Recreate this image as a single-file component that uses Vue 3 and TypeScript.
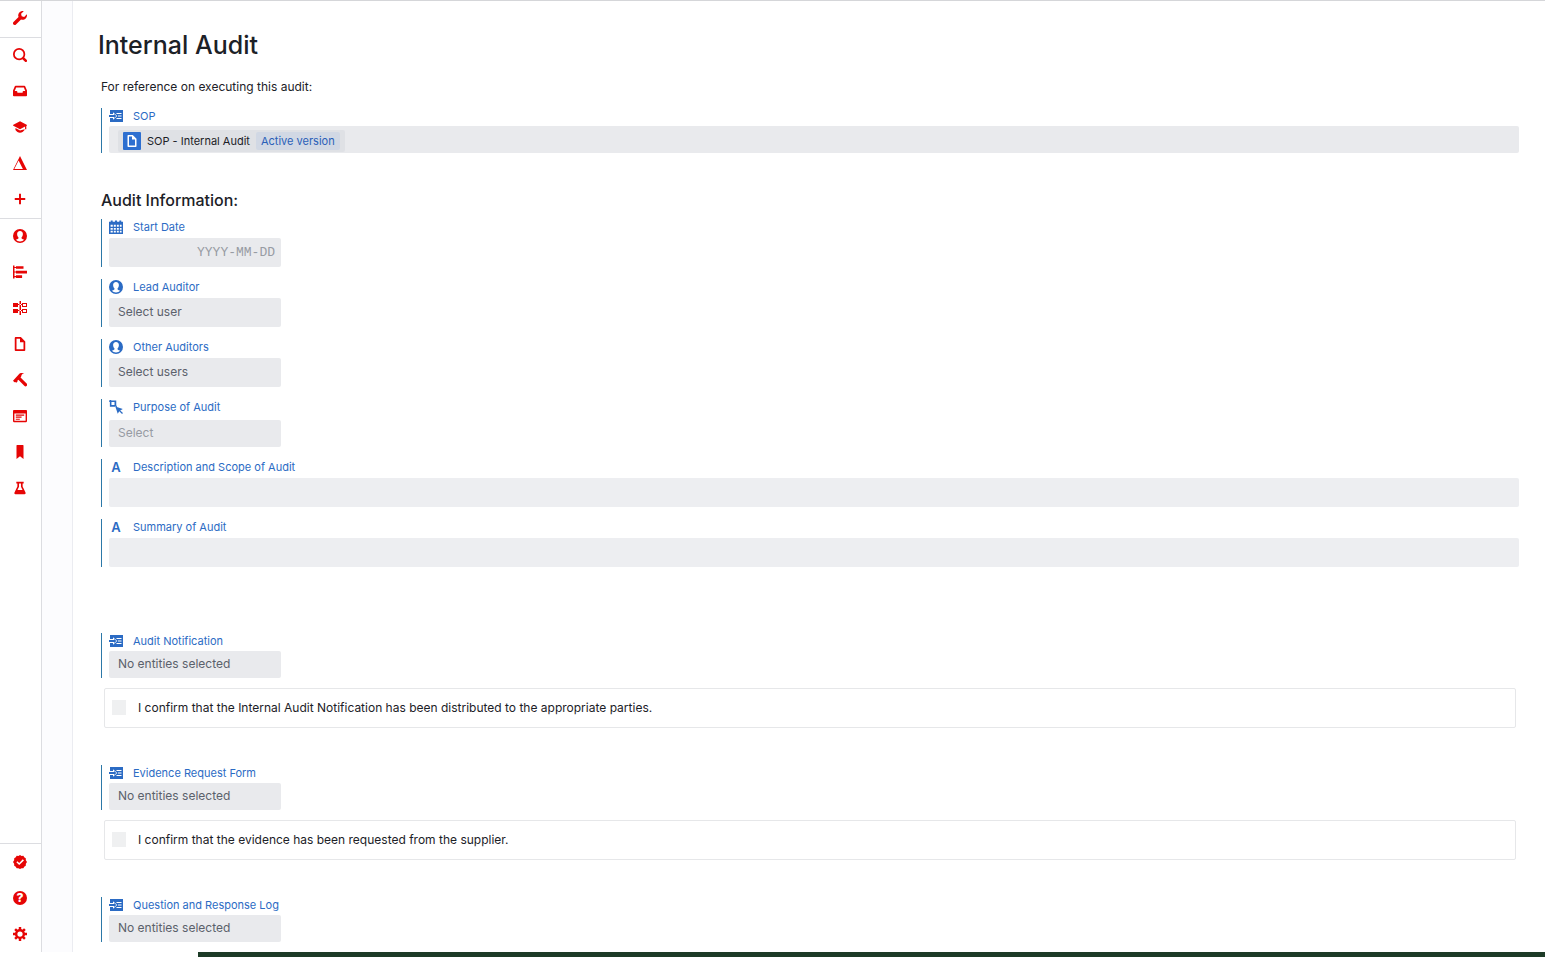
<script setup lang="ts">
import { ref } from 'vue'

interface NavItem {
  id: string
  label: string
}

interface Evidence {
  id: string
  label: string
  confirm: string
}

const navGroups: NavItem[][] = [
  [{ id: 'wrench', label: 'Tools' }],
  [
    { id: 'search', label: 'Search' },
    { id: 'inbox', label: 'Inbox' },
    { id: 'learning', label: 'Training' },
    { id: 'delta', label: 'Changes' },
    { id: 'plus', label: 'Create' },
  ],
  [
    { id: 'user', label: 'Users' },
    { id: 'gantt', label: 'Timeline' },
    { id: 'flow', label: 'Traceability' },
    { id: 'document', label: 'Documents' },
    { id: 'build', label: 'Builds' },
    { id: 'application', label: 'Forms' },
    { id: 'bookmark', label: 'Bookmarks' },
    { id: 'flask', label: 'Tests' },
  ],
  [
    { id: 'endorsed', label: 'Approvals' },
    { id: 'help', label: 'Help' },
    { id: 'cog', label: 'Settings' },
  ],
]

const evidence: Evidence[] = [
  {
    id: 'notification',
    label: 'Audit Notification',
    confirm: 'I confirm that the Internal Audit Notification has been distributed to the appropriate parties.',
  },
  {
    id: 'evidence',
    label: 'Evidence Request Form',
    confirm: 'I confirm that the evidence has been requested from the supplier.',
  },
  { id: 'log', label: 'Question and Response Log', confirm: '' },
]

const startDate = ref('')
const purpose = ref('')
const description = ref('')
const summary = ref('')
const confirmed = ref<string[]>([])
</script>

<template>
  <div class="shell">
    <svg class="symbols" aria-hidden="true">
      <symbol id="i-wrench" viewBox="0 0 16 16"><path d="M15.83 3.7l-3.06 3.05-2.84-.7-.7-2.83L12.29.17a5 5 0 0 0-4.83 1.29 4.97 4.97 0 0 0-1.12 5.36L.58 12.58A2 2 0 0 0 2 16c.55 0 1.05-.22 1.41-.59l5.77-5.77c1.79.69 3.91.35 5.35-1.12 1.32-1.3 1.74-3.15 1.3-4.82z" /></symbol>
      <symbol id="i-search" viewBox="0 0 16 16"><path fill-rule="evenodd" d="M15.55 13.43l-2.67-2.68A6.94 6.94 0 0 0 14 7a7 7 0 1 0-7 7c1.39 0 2.68-.42 3.76-1.11l2.68 2.67a1.5 1.5 0 1 0 2.12-2.12zM7 12A5 5 0 1 1 7 2a5 5 0 0 1 0 10z" /></symbol>
      <symbol id="i-inbox" viewBox="0 0 16 16"><path fill-rule="evenodd" d="M13.91 2.6A1 1 0 0 0 13 2H3a1 1 0 0 0-.92.6L0 7.45V13c0 .55.45 1 1 1h14c.55 0 1-.45 1-1V7.45zM12 8c-.55 0-1 .45-1 1v1H5V9c0-.55-.45-1-1-1H2l1.6-4h8.8L14 8z" /></symbol>
      <symbol id="i-learning" viewBox="0 0 16 16"><path d="M8 1.3.4 5.3c-.5.3-.5.9 0 1.2L8 10.6l5.800-3.100v3.200h1.400V6.800l.4-.3c.5-.3.5-.9 0-1.200zM2.800 9.100v2.400C4 13.400 5.900 14.600 8 14.600s4-1.200 5.200-3.100v-.9L8 12z" /></symbol>
      <symbol id="i-delta" viewBox="0 0 16 16"><path fill-rule="evenodd" d="M8 0 0 16h16zM6.400 5 11.300 14.800H1.500z" /></symbol>
      <symbol id="i-plus" viewBox="0 0 16 16"><path d="M6.900 2h2.200v4.900H14v2.200H9.100V14H6.900V9.100H2V6.900h4.900z" /></symbol>
      <symbol id="i-user" viewBox="0 0 16 16"><path fill-rule="evenodd" d="M8 0a8 8 0 1 0 0 16A8 8 0 0 0 8 0zM8 2.200c2.100 0 3.300 1.500 3.300 3.500 0 1.600-.6 3-1.500 3.800v1.300c.8.700 2 1 3 1.600A6.400 6.400 0 0 1 8 14.400a6.400 6.400 0 0 1-4.800-2c1-.6 2.200-.9 3-1.600V9.500C5.300 8.700 4.700 7.300 4.700 5.700c0-2 1.200-3.500 3.300-3.500z" /></symbol>
      <symbol id="i-gantt" viewBox="0 0 16 16"><path d="M0 .6h1.700v14.800H0zM3.400 1.300H12v3.100H3.400zM3.400 6.500H16v3.100H3.400zM3.400 11.700h7v3.100h-7zM1 2.300h3v1.200H1zM1 7.500h3v1.200H1zM1 12.700h3v1.200H1z" /></symbol>
      <symbol id="i-flow" viewBox="0 0 14 14"><path fill-rule="evenodd" d="M6.500 0H8v14H6.500zM0 2h5v1h2v1H5v2H0zM0 8h5v1h2v1H5v2H0zM9 2h5v4H9V4H7V3h2zm1 1v2h3V3zM9 8h5v4H9v-2H7V9h2zm1 1v2h3V9z" /></symbol>
      <symbol id="i-document" viewBox="0 0 16 16"><path fill-rule="evenodd" d="M9 0H3c-.55 0-1 .45-1 1v14c0 .55.45 1 1 1h10c.55 0 1-.45 1-1V5zm3 14H4V2h4v4h4z" /></symbol>
      <symbol id="i-build" viewBox="0 0 16 16"><path d="M0 8.900 6.500 1.600C7.900.1 10.500-.4 12.900.7c-2 .3-3.200 1.300-3.400 2.700-.1.700-.4 1.200-.9 1.700l7 6.900c.8.900.8 2 .1 2.700-.8.800-1.900.8-2.800 0L6.100 7.700 5 8.800l.2.900-1.500 1.500-1.200-1-.9.400z" /></symbol>
      <symbol id="i-application" viewBox="0 0 16 16"><path fill-rule="evenodd" d="M1 1h14c.55 0 1 .45 1 1v12c0 .55-.45 1-1 1H1c-.55 0-1-.45-1-1V2c0-.55.45-1 1-1zm.6 4v8.400h12.800V5zM3.200 6.400h9.600v1.300H3.200zM3.200 8.700h6.600V10H3.200zM3.200 11h4.600v1.200H3.200z" /></symbol>
      <symbol id="i-bookmark" viewBox="0 0 16 16"><path d="M4.600 0h6.800c.4 0 .6.300.6.600V16l-4-3.200L4 16V.600c0-.3.200-.6.600-.6z" /></symbol>
      <symbol id="i-flask" viewBox="0 0 16 16"><path fill-rule="evenodd" d="M3.800.9h8.400v1.900H11v3.400l3.300 7c.4 1-.1 1.900-1.100 1.900H2.800c-1 0-1.500-.9-1.100-1.900l3.300-7V2.800H3.800zM6.900 2.800v3.900L5.100 10.400h5.800L9.100 6.700V2.800z" /></symbol>
      <symbol id="i-endorsed" viewBox="0 0 16 16"><path fill-rule="evenodd" d="M8 0l1.800 1 2-.1 1 1.800 1.800 1.100L14.700 6 16 8l-1.300 2-.1 2.200-1.800 1.100-1 1.800-2-.1L8 16l-1.800-1-2 .1-1-1.800-1.800-1.100L1.300 10 0 8l1.300-2 .1-2.200 1.800-1.100 1-1.800 2 .1zM11.200 4.900 7.100 9 5 7 3.800 8.200l3.300 3.200 5.400-5.200z" /></symbol>
      <symbol id="i-cog" viewBox="0 0 16 16"><circle cx="8" cy="8" r="4.400" fill="none" stroke="currentColor" stroke-width="2.800" /><path d="M8 0v3.500M8 12.500V16M0 8h3.500M12.500 8H16M2.400 2.400l2.400 2.400M11.200 11.200l2.400 2.400M13.600 2.400l-2.400 2.400M4.800 11.200l-2.400 2.400" stroke="currentColor" stroke-width="2.800" /></symbol>
      <symbol id="i-import" viewBox="0 0 14 14"><path d="M1 1h13v12H1z" /><path d="M0 5h4V3.200L8.300 7 4 10.800V9H0z" fill="#fff" /><path d="M0 6h5V4.900L7.500 7 5 9.100V8H0z" /><path d="M7 4h5.500v1H8zM9 6.500h3.500v1H9zM8 9h4.500v1H7z" fill="#fff" /></symbol>
      <symbol id="i-calendar" viewBox="0 0 16 16"><path fill-rule="evenodd" d="M0 2h2V.6h2.200V2h2.600V.6H9.200V2h2.600V.6H14V2h2v14H0zM1.800 5.500v2.300h2.500V5.500zm3.700 0v2.300h2.300V5.500zm3.500 0v2.300h2.200V5.500zm3.400 0v2.300h2V5.500zM1.800 9v2.200h2.500V9zm3.700 0v2.200h2.300V9zM9 9v2.200h2.200V9zm3.400 0v2.200h2V9zM1.800 12.400v2h2.500v-2zm3.700 0v2h2.300v-2zm3.500 0v2h2.200v-2zm3.400 0v2h2v-2z" /></symbol>
      <symbol id="i-select" viewBox="0 0 16 16"><path fill-rule="evenodd" d="M0 .7h1V0h1.500v.7H8.300v5.800h.8v1.400H7.200v-.2H1V2.100H0zM2.800 2.400v3.400h3.500V2.400zM7.200 7.400l8.600 2.800-3 1.700 3.200 3L14.900 16l-3.200-3.100-1.700 2.900z" /></symbol>
    </svg>

    <div class="workspace">
      <nav class="rail" aria-label="Main">
        <div v-for="(group, index) in navGroups" :key="index" class="rail-group">
          <button v-for="item in group" :key="item.id" class="rail-item" type="button" :aria-label="item.label">
            <span v-if="item.id === 'help'" class="help">?</span>
            <svg v-else class="icon" aria-hidden="true"><use :href="`#i-${item.id}`" /></svg>
          </button>
        </div>
      </nav>
      <div class="gutter"></div>

      <main class="page">
        <h1 class="title">Internal Audit</h1>

        <div class="body">
          <p class="intro">For reference on executing this audit:</p>

          <section class="field" aria-labelledby="sop-label">
            <span id="sop-label" class="label">
              <svg class="icon" aria-hidden="true"><use href="#i-import" /></svg>SOP
            </span>
            <div class="box compact wide holder">
              <a class="chip" href="#sop">
                <span class="chip-icon"><svg aria-hidden="true"><use href="#i-document" /></svg></span>
                SOP - Internal Audit
                <span class="tag">Active version</span>
              </a>
            </div>
          </section>

          <h2 class="heading">Audit Information:</h2>

          <div class="fields">
            <div class="field">
              <label class="label" for="start-date">
                <svg class="icon" aria-hidden="true"><use href="#i-calendar" /></svg>Start Date
              </label>
              <input id="start-date" v-model="startDate" class="box date" type="text" placeholder="YYYY-MM-DD" />
            </div>
            <div class="field">
              <label class="label" for="lead-auditor">
                <svg class="icon" aria-hidden="true"><use href="#i-user" /></svg>Lead Auditor
              </label>
              <button id="lead-auditor" class="box" type="button">Select user</button>
            </div>
            <div class="field">
              <label class="label" for="other-auditors">
                <svg class="icon" aria-hidden="true"><use href="#i-user" /></svg>Other Auditors
              </label>
              <button id="other-auditors" class="box" type="button">Select users</button>
            </div>
            <div class="field">
              <label class="label" for="purpose">
                <svg class="icon" aria-hidden="true"><use href="#i-select" /></svg>Purpose of Audit
              </label>
              <select id="purpose" v-model="purpose" class="box compact muted">
                <option value="">Select</option>
              </select>
            </div>
            <div class="field">
              <label class="label" for="description">
                <span class="letter" aria-hidden="true">A</span>Description and Scope of Audit
              </label>
              <input id="description" v-model="description" class="box wide pale" type="text" />
            </div>
            <div class="field">
              <label class="label" for="summary">
                <span class="letter" aria-hidden="true">A</span>Summary of Audit
              </label>
              <input id="summary" v-model="summary" class="box wide pale" type="text" />
            </div>
          </div>

          <section v-for="item in evidence" :key="item.id" class="evidence">
            <div class="field">
              <label class="label" :for="item.id">
                <svg class="icon" aria-hidden="true"><use href="#i-import" /></svg>{{ item.label }}
              </label>
              <button :id="item.id" class="box compact" type="button">No entities selected</button>
            </div>
            <label class="confirm">
              <template v-if="item.confirm">
                <input v-model="confirmed" class="check" type="checkbox" :value="item.id" />
                {{ item.confirm }}
              </template>
            </label>
          </section>
        </div>
      </main>
    </div>

    <footer class="strip"></footer>
  </div>
</template>

<style>
body {
  margin: 0;
  background: #fff;
}
</style>

<style scoped>
.shell {
  display: flex;
  flex-direction: column;
  box-sizing: border-box;
  height: 100vh;
  border-top: 1px solid #d5d6d9;
  overflow: hidden;
  font-family: Inter, "Liberation Sans", sans-serif;
  font-size: 12px;
  color: #1c2127;
}
.symbols {
  position: absolute;
  width: 0;
  height: 0;
}
.workspace {
  display: flex;
  flex: 1;
  min-height: 0;
}
.strip {
  flex: none;
  height: 5px;
  margin-left: 198px;
  background: #1d3b27;
}

.rail {
  display: flex;
  flex: none;
  flex-direction: column;
  width: 41px;
  border-right: 1px solid #dcdde1;
}
.rail-group {
  display: flex;
  flex-direction: column;
  gap: 16px;
  padding: 7px 1px 9px 0;
  border-bottom: 1px solid #dcdde1;
}
.rail-group:nth-child(3) {
  border-bottom: 0;
}
.rail-group:last-child {
  margin-top: auto;
  padding: 8px 1px 8px 0;
  border-top: 1px solid #dcdde1;
  border-bottom: 0;
}
.rail-item {
  display: flex;
  align-items: center;
  justify-content: center;
  height: 20px;
  padding: 0;
  border: 0;
  background: none;
  color: #e60505;
  cursor: pointer;
}
.icon {
  flex: none;
  width: 14px;
  height: 14px;
  fill: currentColor;
}
.help {
  width: 14px;
  height: 14px;
  border-radius: 7px;
  background: #e60505;
  color: #fff;
  font-family: Inter, "Liberation Sans", sans-serif;
  font-size: 12px;
  font-weight: 800;
  line-height: 14px;
  text-align: center;
}
.gutter {
  flex: none;
  width: 30px;
  border-right: 1px solid #ebecf1;
  background: #fcfcfe;
}

.page {
  flex: 1;
  min-width: 0;
  padding: 28px 26px 0 25px;
  overflow: hidden;
}
.title {
  margin: 0;
  font-size: 25px;
  font-weight: 500;
  line-height: 32px;
}
.body {
  padding-left: 3px;
}
.intro {
  margin: 16px 0 11px;
  line-height: 20px;
}
.heading {
  margin: 35px 0 7px;
  font-size: 16px;
  font-weight: 500;
  line-height: 24px;
}
.fields {
  display: grid;
  gap: 12px;
  margin-bottom: 66px;
}
.field {
  display: flex;
  flex-direction: column;
  align-items: flex-start;
  padding-left: 7px;
  border-left: 1px solid #2c78a8;
}
.fields .field {
  min-height: 48px;
}
.label {
  display: flex;
  align-items: center;
  gap: 10px;
  height: 16px;
  padding-bottom: 2px;
  font-size: 11px;
  line-height: 16px;
  color: #2b6bc4;
}
.letter {
  width: 14px;
  font-size: 13px;
  font-weight: 600;
  text-align: center;
}
.box {
  display: flex;
  align-items: center;
  box-sizing: border-box;
  width: 172px;
  height: 29px;
  margin: auto 0 0;
  padding: 0 9px 2px;
  border: 0;
  border-radius: 2px;
  background: #e9eaed;
  font: inherit;
  line-height: 20px;
  color: #5b616b;
  appearance: none;
}
.compact {
  height: 27px;
}
.wide {
  width: 100%;
}
.holder {
  align-items: flex-end;
  padding-bottom: 1px;
}
.pale {
  background: #edeef1;
}
.muted {
  color: #979ba3;
}
.date {
  padding: 0 6px;
  font-family: "Liberation Mono", monospace;
  font-size: 13px;
  text-align: right;
}
.date::placeholder {
  color: #979ba3;
  opacity: 1;
}
.chip {
  display: flex;
  align-items: center;
  gap: 6px;
  height: 22px;
  padding: 0 5px;
  border-radius: 2px;
  background: #dfe1e5;
  font-size: 11px;
  color: #1c2127;
  text-decoration: none;
}
.chip-icon {
  display: flex;
  align-items: center;
  justify-content: center;
  width: 18px;
  height: 18px;
  border-radius: 1px;
  background: #2d6fd0;
}
.chip-icon svg {
  width: 12px;
  height: 12px;
  fill: #fff;
}
.tag {
  padding: 0 5px;
  border-radius: 2px;
  background: #d1d8e4;
  line-height: 18px;
  color: #2a5fb8;
}

.evidence {
  margin-bottom: 37px;
}
.confirm {
  display: flex;
  align-items: center;
  gap: 12px;
  box-sizing: border-box;
  min-height: 40px;
  margin: 10px 3px 0;
  padding: 0 7px 1px;
  border: 1px solid #e6e7e9;
  border-radius: 2px;
}
.check {
  width: 14px;
  height: 15px;
  margin: 0;
  background: #eff0f1;
  appearance: none;
}
</style>
